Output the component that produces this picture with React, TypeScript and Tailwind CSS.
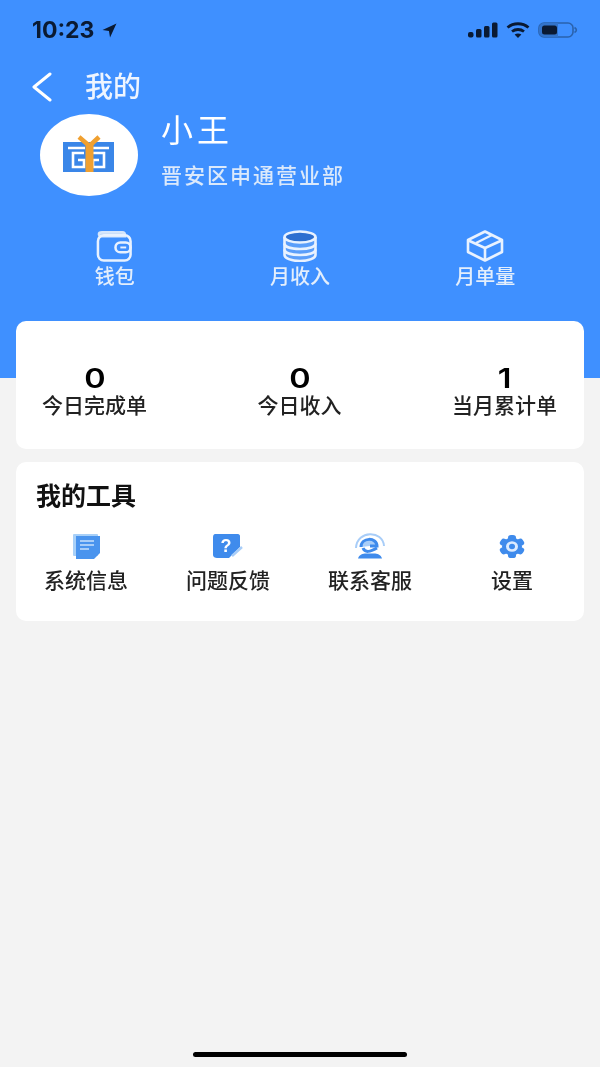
const cjk = "font-['Inter','Noto_Sans_CJK_SC',sans-serif]";

function StatusBar() {
  return (
    <div className="flex items-center justify-between pl-[32px] pr-[22px] pt-[12px] h-[48px]">
      <div className="flex items-center gap-[8px]">
        <span className="text-[23px] leading-[24px] font-bold text-[#0a1a33]">10:23</span>
        <svg width="15" height="15" viewBox="0 0 14 14" fill="#0a1a33">
          <path d="M13.5 0.5 L0.5 6.5 L6.5 7.5 L7.5 13.5 Z" />
        </svg>
      </div>
      <div className="flex items-center gap-[8px]">
        <svg width="30" height="16" viewBox="0 0 30 16" fill="#0a1a33">
          <rect x="0" y="10" width="5.5" height="5.5" rx="2" />
          <rect x="8" y="7" width="5.5" height="8.5" rx="1.5" />
          <rect x="16" y="4" width="5.5" height="11.5" rx="1.5" />
          <rect x="24" y="0.5" width="5.5" height="15" rx="1.5" />
        </svg>
        <svg width="24" height="16" viewBox="0 0 24 16" fill="none" stroke="#0a1a33" strokeWidth="2.8">
          <path d="M1.5 5.5 C7.5 0.5 16.5 0.5 22.5 5.5" />
          <path d="M6 9.5 C9.5 6.8 14.5 6.8 18 9.5" />
          <path d="M12 16 L8.6 12.4 C10.6 11.2 13.4 11.2 15.4 12.4 Z" fill="#0a1a33" stroke="none" />
        </svg>
        <svg width="40" height="16" viewBox="0 0 40 16" fill="none">
          <rect x="1" y="1" width="34" height="14" rx="5" stroke="#2a62ad" strokeWidth="1.6" />
          <path d="M6 1 H20 V15 H6 A5 5 0 0 1 1 10 V6 A5 5 0 0 1 6 1 Z" fill="#3274cc" />
          <rect x="4" y="3.5" width="15" height="9" rx="2.5" fill="#0a1a33" />
          <path d="M36.5 5.5 C39 7 39 9 36.5 10.5" stroke="#2a62ad" strokeWidth="1.6" />
        </svg>
      </div>
    </div>
  );
}

function Logo() {
  return (
    <div className="w-[98px] h-[82px] rounded-[50%] bg-white flex items-center justify-center">
      <svg width="52" height="38" viewBox="0 0 52 38" fill="none" className="mt-[-2px]">
        <rect x="0" y="7" width="51" height="30" fill="#3a86e8" />
        <path d="M5 13 H22 M21 18 H10 V32 H21 V25 H15" stroke="#fff" strokeWidth="2.6" />
        <path d="M46 13 H29 M30 18 H41 V32 H30 V25 H36" stroke="#fff" strokeWidth="2.6" />
        <path d="M16 2 L26.5 11 L36 2" stroke="#f0a030" strokeWidth="4.5" />
        <rect x="22.5" y="10" width="8" height="27" fill="#f0a030" />
      </svg>
    </div>
  );
}

function WalletIcon() {
  return (
    <svg width="37" height="32" viewBox="0 0 38 32" fill="none" stroke="#e9f2ff" strokeWidth="2.6">
      <path d="M6 2 H27 C29 2 30 3.5 30 6 H6 C2 6 2 2 6 2 Z" fill="#a9c8f2" stroke="#d6e6fb" />
      <rect x="2" y="5" width="33.5" height="26" rx="6" />
      <rect x="20" y="12.5" width="15.5" height="10" rx="5" />
      <path d="M25 17.5 H31" strokeWidth="2" />
    </svg>
  );
}

function StackIcon() {
  return (
    <svg width="36" height="32" viewBox="0 0 36 32" fill="none" stroke="#e9f2ff" strokeWidth="2.6">
      <path d="M2.5 7 V25 C2.5 28 9 31 18 31 C27 31 33.5 28 33.5 25 V7" fill="#8fb9f2" fillOpacity="0.35" />
      <ellipse cx="18" cy="7" rx="15.5" ry="5.5" fill="#2d6fd0" />
      <path d="M2.5 13.5 C2.5 17 9 19 18 19 C27 19 33.5 17 33.5 13.5" />
      <path d="M2.5 19.5 C2.5 23 9 25 18 25 C27 25 33.5 23 33.5 19.5" />
    </svg>
  );
}

function BoxIcon() {
  return (
    <svg width="38" height="32" viewBox="0 0 38 32" fill="none" stroke="#e9f2ff" strokeWidth="2.6" strokeLinejoin="round">
      <path d="M19 1.5 L36 10 V22 L19 30.5 L2 22 V10 Z" />
      <path d="M2.5 10.5 L19 18 L35.5 10.5" />
      <path d="M19 18 V30" />
      <path d="M10 13 L26 5" strokeWidth="2.2" />
    </svg>
  );
}

function NoteIcon() {
  return (
    <svg width="27" height="25" viewBox="0 0 27 25">
      <rect x="0" y="0" width="25" height="22" rx="1" fill="#a8d0f8" />
      <path d="M3 2 H27 V19 L21 25 H3 Z" fill="#4a94ee" />
      <path d="M7 7 H21 M7 11 H21 M7 15 H16" stroke="#a8cdf8" strokeWidth="2" />
    </svg>
  );
}

function QuestionIcon() {
  return (
    <svg width="31" height="26" viewBox="0 0 31 26" fill="none">
      <path d="M0 4 C0 1.5 1.5 1 3 1 H25 C26 1 27 2 27 3 V14 L16 25 H4 C2 25 0 24 0 22 Z" fill="#3f8bec" />
      <text x="13" y="19" textAnchor="middle" fontSize="18" fontWeight="700" fill="#fff" fontFamily="Liberation Sans">?</text>
      <path d="M19 23 L29 14" stroke="#a8cdf8" strokeWidth="2.5" />
    </svg>
  );
}

function ServiceIcon() {
  return (
    <svg width="30" height="26" viewBox="0 0 30 26" fill="none">
      <path d="M1 15 C2 -3 28 -3 29 13" stroke="#a8cdf8" strokeWidth="2" />
      <path d="M6 14 C6 4 22 4 22 13 L15 13" stroke="#3f8bec" strokeWidth="3" fill="#a8cdf8" />
      <path d="M8 15 C10 20 15 19 22 15" stroke="#3f8bec" strokeWidth="3" />
      <path d="M3 25.5 C4 21.5 8 20.5 11 20.5 H19 C22 20.5 26 21.5 27 25.5 Z" fill="#3f8bec" />
    </svg>
  );
}

function GearIcon() {
  return (
    <svg width="28" height="25" viewBox="0 0 28 28" preserveAspectRatio="none" fill="#3f8bec">
      <circle cx="14" cy="14" r="10" />
      <rect x="10" y="1" width="8" height="7" rx="3" />
      <rect x="10" y="20" width="8" height="7" rx="3" />
      <rect x="10" y="1" width="8" height="7" rx="3" transform="rotate(60 14 14)" />
      <rect x="10" y="1" width="8" height="7" rx="3" transform="rotate(120 14 14)" />
      <rect x="10" y="1" width="8" height="7" rx="3" transform="rotate(240 14 14)" />
      <rect x="10" y="1" width="8" height="7" rx="3" transform="rotate(300 14 14)" />
      <circle cx="14" cy="14" r="6" fill="#dcebff" />
      <circle cx="14" cy="14" r="3" fill="#3f8bec" />
    </svg>
  );
}

const tools = [
  { label: "系统信息", icon: <NoteIcon /> },
  { label: "问题反馈", icon: <QuestionIcon /> },
  { label: "联系客服", icon: <ServiceIcon /> },
  { label: "设置", icon: <GearIcon /> },
];

export default function App() {
  return (
    <div className={`${cjk} h-[1067px] flex flex-col bg-[#f3f3f3] overflow-hidden blur-[0.7px]`}>
      {/* 头部 */}
      <div className="h-[378px] shrink-0 bg-[#3f90ff] text-white">
        <StatusBar />
        <div className="flex items-center pl-[31px] h-[52px] mt-[13px]">
          <svg width="22" height="30" viewBox="0 0 22 30" fill="none" stroke="#fff" strokeWidth="3" strokeLinecap="round" strokeLinejoin="round">
            <path d="M19 2 L3 15 L19 28" />
          </svg>
          <span className="ml-[32px] text-[28px] leading-[36px] font-medium text-[#eef5ff]">我的</span>
        </div>
        <div className="flex items-start pl-[40px] gap-[23px] mt-[1px]">
          <Logo />
          <div className="flex flex-col -mt-[3px]">
            <span className="text-[32px] leading-[40px] tracking-[4px]">小王</span>
            <span className="mt-[11px] text-[21px] leading-[28px] tracking-[2px] font-medium text-[#dbe9fb]">晋安区申通营业部</span>
          </div>
        </div>
        <div className="grid grid-cols-3 mt-[34px] px-[22px] text-[#e3eefc]">
          <div className="flex flex-col items-center">
            <WalletIcon />
            <span className="mt-px text-[20px] leading-[28px] font-medium">钱包</span>
          </div>
          <div className="flex flex-col items-center">
            <StackIcon />
            <span className="mt-px text-[20px] leading-[28px] font-medium">月收入</span>
          </div>
          <div className="flex flex-col items-center">
            <BoxIcon />
            <span className="mt-px text-[20px] leading-[28px] font-medium">月单量</span>
          </div>
        </div>
      </div>

      {/* 今日数据 */}
      <div className="mx-[16px] -mt-[57px] h-[128px] rounded-[10px] bg-white flex items-center justify-between pt-[16px] pl-[26px] pr-[27px]">
        {[
          ["0", "今日完成单"],
          ["0", "今日收入"],
          ["1", "当月累计单"],
        ].map(([n, label]) => (
          <div key={label} className="flex flex-col items-center">
            <span className="text-[27px] leading-[26px] font-semibold text-black scale-x-[1.2]">{n}</span>
            <span className="text-[21px] leading-[28px] font-medium text-[#222]">{label}</span>
          </div>
        ))}
      </div>

      {/* 我的工具 */}
      <div className="mx-[16px] mt-[13px] h-[159px] rounded-[10px] bg-white pt-[16px] px-[20px]">
        <div className="text-[25px] leading-[36px] font-bold text-[#111]">我的工具</div>
        <div className="grid grid-cols-4 mt-[19px] -ml-[21px] -mr-[19px]">
          {tools.map((t) => (
            <div key={t.label} className="flex flex-col items-center">
              <div className="h-[26px] flex items-center">{t.icon}</div>
              <span className="mt-[8px] text-[21px] leading-[28px] font-medium text-[#222]">{t.label}</span>
            </div>
          ))}
        </div>
      </div>

      <div className="mt-auto mb-[10px] mx-auto w-[214px] h-[5px] rounded-full bg-black" />
    </div>
  );
}
